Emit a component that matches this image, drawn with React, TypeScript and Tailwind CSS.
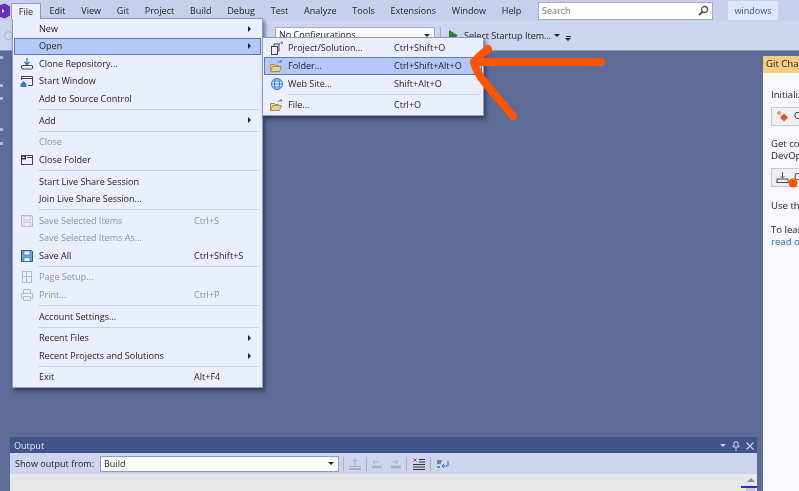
import React from "react";

const font = "font-['Open_Sans','Noto_Sans',sans-serif]";

function Arrow() {
  return <span className="ml-auto mr-[9px] w-0 h-0 border-y-[3px] border-y-transparent border-l-[3.5px] border-l-[#222]" />;
}

const Ico = {
  clone: (
    <svg width="14" height="14" viewBox="0 0 14 14">
      <path d="M7 1v6M4.500 5L7 7.600 9.500 5" stroke="#2a6fc4" strokeWidth="1.200" fill="none" />
      <rect x="1.500" y="8.500" width="11" height="3.500" rx="0.500" fill="#eef1fd" stroke="#444" />
    </svg>
  ),
  start: (
    <svg width="14" height="14" viewBox="0 0 14 14">
      <path d="M1.500 6V2.500h11v9H8" stroke="#444" fill="none" />
      <path d="M1.500 4.500h11" stroke="#444" />
      <path d="M0.500 10l3-3 3 3v3h-6z" fill="#2a7fd0" />
    </svg>
  ),
  closeFolder: (
    <svg width="14" height="14" viewBox="0 0 14 14">
      <rect x="1.500" y="2.500" width="11" height="9" fill="none" stroke="#444" />
      <rect x="1" y="2" width="5" height="4.500" fill="#333" />
      <rect x="2.500" y="3.500" width="2" height="1.500" fill="#eef1fd" />
      <path d="M7 4.500h5.500" stroke="#444" />
    </svg>
  ),
  save: (c: string, fill: string) => (
    <svg width="14" height="14" viewBox="0 0 14 14">
      <path d="M1.500 1.500h10l1 1v10h-11z" fill={fill} stroke={c} />
      <rect x="4" y="2" width="6" height="4" fill="#eef1fd" stroke={c} strokeWidth="0.600" />
      <rect x="4" y="8.500" width="6" height="4" fill="#eef1fd" stroke={c} strokeWidth="0.600" />
    </svg>
  ),
  page: (
    <svg width="14" height="14" viewBox="0 0 14 14">
      <path d="M2.500 1.500h9v11h-9zM2.500 6.500h9M6.500 1.500v11" fill="none" stroke="#b4b8c2" />
    </svg>
  ),
  print: (
    <svg width="14" height="14" viewBox="0 0 14 14">
      <path d="M3.500 5V1.500h7V5M3.500 10h-2V5.500h11V10h-2M3.500 8.500h7v4h-7z" fill="none" stroke="#b4b8c2" />
    </svg>
  ),
  project: (
    <svg width="14" height="14" viewBox="0 0 14 14">
      <rect x="1.500" y="5.500" width="6" height="8" fill="none" stroke="#444" />
      <path d="M4 5.500V3h5v7H7.500" fill="none" stroke="#444" />
      <path d="M9 3.500c.5-1.500 2-2 3.500-1.800M11.500.5l1.500 1.300-1.500 1.300" stroke="#2a6fc4" fill="none" />
    </svg>
  ),
  folder: (
    <svg width="15" height="13" viewBox="0 0 15 13">
      <path d="M1.500 11.500V4.500h4l1 1h3v1M1.500 11.500l2-5h9l-2 5z" fill="#e6d2a0" stroke="#b08a45" />
      <path d="M9 3c.6-1.300 2-1.800 3.400-1.600M11.500.3l1.500 1.200-1.500 1.200" stroke="#2a6fc4" fill="none" />
    </svg>
  ),
  globe: (
    <svg width="14" height="14" viewBox="0 0 14 14">
      <circle cx="7" cy="7" r="5.500" fill="#d7e8fa" stroke="#2a7fd0" />
      <ellipse cx="7" cy="7" rx="2.500" ry="5.500" fill="none" stroke="#2a7fd0" />
      <path d="M1.500 7h11M2.500 4h9M2.500 10h9" stroke="#2a7fd0" strokeWidth="0.800" />
    </svg>
  ),
};

type Row = { t: string; k?: string; d?: boolean; i?: React.ReactNode; a?: boolean; h?: boolean } | "sep";

const file: Row[] = [
  { t: "New", a: true },
  { t: "Open", a: true, h: true },
  { t: "Clone Repository...", i: Ico.clone },
  { t: "Start Window", i: Ico.start },
  { t: "Add to Source Control" },
  "sep",
  { t: "Add", a: true },
  "sep",
  { t: "Close", d: true },
  { t: "Close Folder", i: Ico.closeFolder },
  "sep",
  { t: "Start Live Share Session" },
  { t: "Join Live Share Session..." },
  "sep",
  { t: "Save Selected Items", k: "Ctrl+S", d: true, i: Ico.save("#b4b8c2", "#e3e6f0") },
  { t: "Save Selected Items As...", d: true },
  { t: "Save All", k: "Ctrl+Shift+S", i: Ico.save("#1f5fa8", "#6fa8e0") },
  "sep",
  { t: "Page Setup...", d: true, i: Ico.page },
  { t: "Print...", k: "Ctrl+P", d: true, i: Ico.print },
  "sep",
  { t: "Account Settings..." },
  "sep",
  { t: "Recent Files", a: true },
  { t: "Recent Projects and Solutions", a: true },
  "sep",
  { t: "Exit", k: "Alt+F4" },
];

const sub: Row[] = [
  { t: "Project/Solution...", k: "Ctrl+Shift+O", i: Ico.project },
  { t: "Folder...", k: "Ctrl+Shift+Alt+O", i: Ico.folder, h: true },
  { t: "Web Site...", k: "Shift+Alt+O", i: Ico.globe },
  "sep",
  { t: "File...", k: "Ctrl+O", i: Ico.folder },
];

function Rows({ rows, textW, iconW, sepH, rowH }: { rows: Row[]; textW: string; iconW: string; sepH: string; rowH: string }) {
  return (
    <>
      {rows.map((r, i) =>
        r === "sep" ? (
          <div key={i} className={`${sepH} flex items-center`}>
            <div className="h-px flex-1 ml-[24px] mr-[2px] bg-[#c9cfec]" />
          </div>
        ) : (
          <div
            key={i}
            className={`${rowH} flex items-center border ${r.h ? "bg-[#b3c8f6] border-[#5f78b4]" : "border-transparent"} ${r.d ? "text-[#8f929b]" : "text-[#1e1e1e]"}`}
          >
            <span className={`${iconW} shrink-0 flex items-center justify-center`}>{r.i}</span>
            <span className={`${textW} shrink-0 whitespace-nowrap`}>{r.t}</span>
            {r.k && <span className="whitespace-nowrap">{r.k}</span>}
            {r.a && <Arrow />}
          </div>
        ),
      )}
    </>
  );
}

const menus = ["Edit", "View", "Git", "Project", "Build", "Debug", "Test", "Analyze", "Tools", "Extensions", "Window", "Help"];
const marks = ["mt-[5px]", "mt-[25px]", "mt-[10px]", "mt-[28px]", "mt-[11px]"];

export default function App() {
  return (
    <div className={`${font} relative w-[799px] h-[491px] overflow-hidden bg-[#5d6b96] flex flex-col text-[9.05px] text-[#1e1e1e] blur-[0.3px]`}>
      {/* menu bar */}
      <div className="h-[21px] shrink-0 bg-[#c6d0ed] flex items-center">
        <div className="w-[538px] shrink-0 flex items-center">
          <svg width="10" height="16" viewBox="0 0 10 16" className="shrink-0">
            <path d="M0 2l5-1.500 5 3v9l-5 3-5-1.500z" fill="#6a2fb5" />
            <path d="M2 6l2.500 2L2 10z" fill="#fff" />
          </svg>
          <div className="w-[31.5px] shrink-0" />
          {menus.map((m) => (
            <span key={m} className="px-[7.9px]">{m}</span>
          ))}
        </div>
        <div className="w-[175px] h-[18px] bg-white border border-[#a5abb8] flex items-center pl-[3px] text-[#777]">
          Search
          <svg width="11" height="11" viewBox="0 0 11 11" className="ml-auto mr-[3px]">
            <circle cx="6.500" cy="4.500" r="3" fill="none" stroke="#555" strokeWidth="1.300" />
            <path d="M4.500 6.500L1 10" stroke="#555" strokeWidth="1.800" />
          </svg>
        </div>
        <div className="ml-[15px] w-[50px] h-[19px] bg-[#dfe6fb] flex items-center justify-center text-[#3f5589]">windows</div>
      </div>

      {/* toolbar */}
      <div className="h-[30px] shrink-0 bg-[#ccd5f0] border-b border-[#8d99bd] flex items-center pl-[4px]">
        <span className="w-[9px] h-[9px] shrink-0 rounded-full border border-[#aab2c8] mt-[-1px]" />
        <div className="ml-[262px] w-[160px] h-[17px] mt-[-1px] bg-white border border-[#a5abb8] flex items-center pl-[3px]">
          No Configurations
          <span className="ml-auto mr-[4px] w-0 h-0 border-x-[3px] border-x-transparent border-t-[3px] border-t-[#222]" />
        </div>
        <div className="ml-[5px] w-px h-[17px] bg-[#a5afd0]" />
        <svg width="9" height="11" viewBox="0 0 9 11" className="ml-[8px]"><path d="M0 0l9 5.500L0 11z" fill="#2e7d32" /></svg>
        <span className="ml-[6px] whitespace-nowrap">Select Startup Item...</span>
        <span className="ml-[3px] w-0 h-0 border-x-[3px] border-x-transparent border-t-[3px] border-t-[#222]" />
        <span className="ml-[5px] mt-[5px] flex flex-col items-center gap-[1px]">
          <span className="w-[5px] h-px bg-[#222]" />
          <span className="w-0 h-0 border-x-[3px] border-x-transparent border-t-[3px] border-t-[#222]" />
        </span>
      </div>

      {/* main */}
      <div className="flex-1 flex min-h-0">
        {/* collapsed side tabs */}
        <div className="w-[10px] shrink-0 flex flex-col items-start">
          {marks.map((c, i) => (
            <span key={i} className={`${c} w-[2.5px] h-[3px] bg-[#aeb8d8]`} />
          ))}
        </div>
        <div className="flex-1 min-w-0 flex flex-col justify-end pr-[6px]">
          <div className="h-[54px] flex flex-col">
            <div className="h-[16px] shrink-0 bg-[#3f5589] text-[#dfe6fb] flex items-center pl-[4px] pt-px">
              Output
              <span className="ml-auto w-0 h-0 border-x-[3px] border-x-transparent border-t-[3px] border-t-[#c6d0ed]" />
              <svg width="8" height="10" viewBox="0 0 8 10" className="ml-[6px]"><path d="M2 1h4v4h1v1H1V5h1zM4 6v4" stroke="#c6d0ed" fill="none" /></svg>
              <svg width="8" height="8" viewBox="0 0 8 8" className="ml-[6px] mr-[3px]"><path d="M0.500 0.500l7 7M7.500 0.500l-7 7" stroke="#c6d0ed" strokeWidth="1.200" /></svg>
            </div>
            <div className="h-[21px] shrink-0 bg-[#ccd5f0] flex items-center pl-[5px]">
              <span className="w-[85px] shrink-0 whitespace-nowrap">Show output from:</span>
              <div className="w-[239px] h-[16px] bg-white border border-[#8d99bd] flex items-center pl-[3px]">
                Build
                <span className="ml-auto mr-[4px] w-0 h-0 border-x-[3px] border-x-transparent border-t-[3px] border-t-[#222]" />
              </div>
              <div className="ml-[4px] w-px h-[14px] bg-[#a5afd0]" />
              <svg width="14" height="12" viewBox="0 0 14 12" className="ml-[4px]"><path d="M7 1v7M5 2.500h4M1 8.500h12" stroke="#a9b1c4" fill="none" /><path d="M1 11h12" stroke="#a9b1c4" strokeWidth="2" /></svg>
              <div className="ml-[4px] w-px h-[14px] bg-[#a5afd0]" />
              <svg width="32" height="12" viewBox="0 0 32 12" className="ml-[4px]"><path d="M2 4h6M2 4l2-2M2 4l2 2M21 4h6M27 4l-2-2M27 4l-2 2" stroke="#a9b1c4" fill="none" /><path d="M1 9h10M20 9h10" stroke="#a9b1c4" strokeWidth="2.500" /></svg>
              <div className="ml-[3px] w-px h-[14px] bg-[#a5afd0]" />
              <svg width="12" height="12" viewBox="0 0 12 12" className="ml-[6px]"><path d="M6 1.500h6M6 4h6M0 6.500h12M0 9h12M0 11.500h12" stroke="#333" /><path d="M0.500 0.500l3 3M3.500 0.500l-3 3" stroke="#d9352a" /></svg>
              <div className="ml-[5px] w-px h-[14px] bg-[#a5afd0]" />
              <svg width="13" height="12" viewBox="0 0 13 12" className="ml-[5px]"><path d="M1 3h5M1 5h4M1 9h3" stroke="#333" /><path d="M12 3v5H6M8 6L6 8l2 2" stroke="#2a6fc4" fill="none" /></svg>
            </div>
            <div className="flex-1 bg-[#e6e7e8] flex flex-col items-end pr-0">
              <span className="mt-[4px] mr-[2px] w-0 h-0 border-x-[4px] border-x-transparent border-b-[4px] border-b-[#8d8f95]" />
              <span className="mt-[4px] w-[16px] h-[2px] bg-[#2b2bd0]" />
              <span className="mr-[2px] w-[9px] flex-1 bg-[#c8c9cc]" />
            </div>
          </div>
        </div>

        {/* Git changes */}
        <div className="w-[36px] shrink-0 pt-[5px] flex flex-col overflow-hidden text-[9.6px]">
          <div className="h-[17px] shrink-0 bg-[#f5cc84] flex items-center pl-[3px] whitespace-nowrap">Git Changes</div>
          <div className="flex-1 bg-[#f7f8ff] pl-[8px] whitespace-nowrap">
            <div className="mt-[15px] h-[13px] leading-[13px]">Initialize a Git repository</div>
            <div className="mt-[6px] h-[19px] w-[150px] bg-[#f0f0f2] border border-[#c5c7cc] flex items-center pl-[4px] gap-[5px]">
              <svg width="13" height="13" viewBox="0 0 13 13" className="shrink-0">
                <circle cx="3" cy="3" r="2" fill="#c9a25a" />
                <path d="M8 3.500l4 4-4 4-4-4z" fill="#e2512c" />
              </svg>
              Create Git Repository...
            </div>
            <div className="mt-[12px] h-[12px] leading-[12px]">Get code from a remote</div>
            <div className="h-[12px] leading-[12px]">DevOps</div>
            <div className="mt-[6px] h-[19px] w-[150px] bg-[#f0f0f2] border border-[#c5c7cc] flex items-center pl-[4px] gap-[5px]">
              <svg width="13" height="13" viewBox="0 0 13 13" className="shrink-0">
                <path d="M6.500 1v6M4.500 5l2 2 2-2" stroke="#2a6fc4" fill="none" />
                <rect x="1" y="8" width="11" height="3.500" fill="#eef1fd" stroke="#444" />
              </svg>
              Clone a Repository...
            </div>
            <div className="mt-[12px] h-[13px] leading-[13px]">Use the Git Changes window</div>
            <div className="mt-[12px] h-[12px] leading-[12px]">To learn more,</div>
            <div className="h-[12px] leading-[12px] text-[#1a6fc4]">read our docs</div>
          </div>
        </div>
      </div>

      {/* File menu */}
      <div className="absolute left-[11px] top-[3px] w-[30px] h-[16px] bg-[#eaeefd] border-x border-t border-[#8d99bd] flex items-center justify-center z-20">File</div>
      <div className="absolute left-[12px] top-[18px] w-[251px] bg-[#eaeefd] border border-[#8d99bd] p-px shadow-[2px_3px_4px_rgba(20,25,50,0.55)] z-10">
        <Rows rows={file} textW="w-[155px]" iconW="w-[24px]" sepH="h-[4.2px]" rowH="h-[17.5px]" />
      </div>

      {/* Open submenu */}
      <div className="absolute left-[262px] top-[37px] w-[222px] bg-[#eaeefd] border border-[#8d99bd] p-px shadow-[2px_3px_4px_rgba(20,25,50,0.55)] z-10">
        <Rows rows={sub} textW="w-[106px]" iconW="w-[23px]" sepH="h-[3px]" rowH="h-[18px]" />
      </div>

      {/* Annotation */}
      <svg className="absolute left-0 top-0 z-30 pointer-events-none" width="799" height="491" viewBox="0 0 799 491">
        <g fill="none" stroke="#ff5500" strokeWidth="8" strokeLinecap="round" strokeLinejoin="round">
          <path d="M601 62H474" />
          <path d="M488 49Q480 55 474 62Q476 72 486 84L513 116" />
        </g>
        <circle cx="793" cy="183" r="4.500" fill="#ff5500" />
      </svg>
    </div>
  );
}
